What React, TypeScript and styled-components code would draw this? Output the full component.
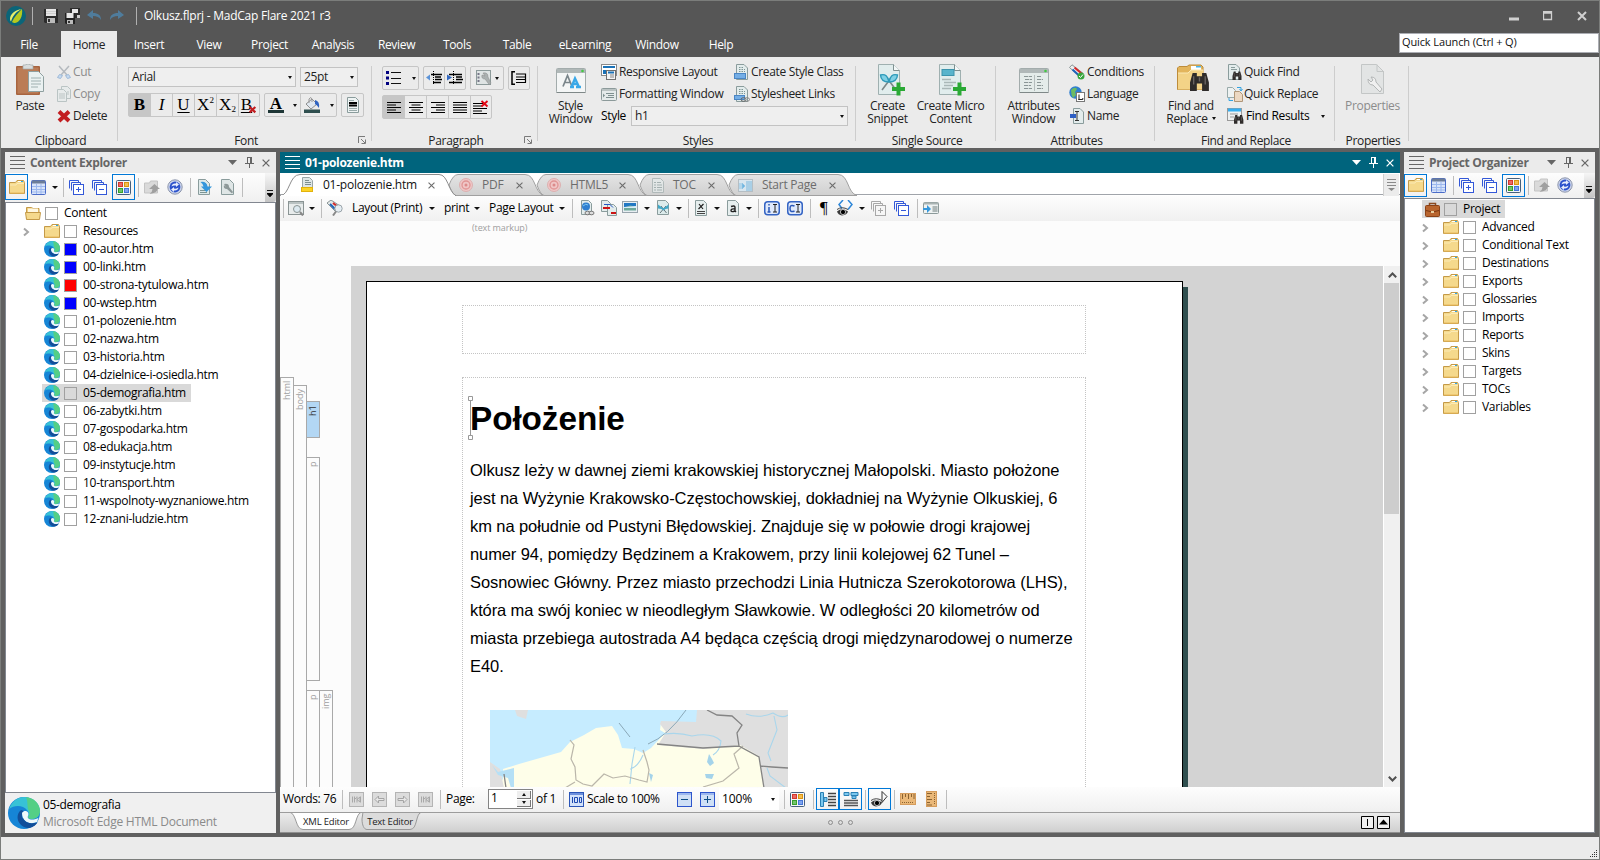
import React from 'react';
import styled, { createGlobalStyle, css } from 'styled-components';

const Global = createGlobalStyle`
  * { box-sizing: border-box; }
  body { margin: 0; overflow: hidden; background: #565656; }
  svg { display: block; flex: none; }
`;

const uiFont = css`
  font-family: "Open Sans", "Noto Sans", sans-serif;
  font-size: 12px;
  letter-spacing: -0.33px;
  line-height: 16px;
  white-space: nowrap;
`;

/* ---------- icons ---------- */

const docPath = (x: number, y: number, w: number, h: number, c = 4) =>
  `M${x} ${y}h${w - c}l${c} ${c}v${h - c}h${-w}z`;

const Doc = ({ x = 2.5, y = 0.5, w = 11, h = 15, c = 3.5 }) => (
  <path d={docPath(x, y, w, h, c)} fill="#e3ecec" stroke="#8a9c9c" />
);

const Binoculars = ({ x, y, s = 1 }: { x: number; y: number; s?: number }) => (
  <g transform={`translate(${x} ${y}) scale(${s})`}>
    <path d="M2.500 1h4v3h5V1h4L18 10v8h-6.500v-7h-5v7H0v-8z" fill="#2f2c2b" />
    <path d="M3.500 4v8M14.500 4v8M9 5v4" stroke="#6a6461" strokeWidth="1.300" />
  </g>
);

const art: Record<string, { box: string; el: React.ReactNode }> = {
  logo: {
    box: '0 0 20 20',
    el: (
      <>
        <circle cx="10" cy="10" r="10" fill="#0b6579" />
        <path d="M16 3C9 4 4 8 4 13c0 1 .5 2 1 2.500C7 9 11 5 16 3z" fill="#e6ef6b" />
        <path d="M16 3C12 7 8 11 6 16c1 .8 2 1 3 1 5-1 8-7 7-14z" fill="#b5c91f" />
      </>
    ),
  },
  save: {
    box: '0 0 14 14',
    el: (
      <>
        <path d="M0 0h14v14H1l-1-1z" fill="#2c2c2c" />
        <rect x="2" y="0" width="10" height="7" fill="#e6e6e6" />
        <path d="M2 2.500h10M2 4.500h10" stroke="#cfcfcf" />
        <rect x="3" y="9" width="8" height="5" fill="#bbb" />
        <rect x="4" y="10" width="2" height="3" fill="#333" />
      </>
    ),
  },
  saveAll: {
    box: '0 0 16 16',
    el: (
      <>
        <path d="M5 0h10v10H5z" fill="#2c2c2c" />
        <rect x="7" y="1" width="6" height="4" fill="#e6e6e6" />
        <rect x="12" y="7" width="3" height="3" fill="#ccc" />
        <path d="M0 5h10v11H1l-1-1z" fill="#222" />
        <rect x="1.500" y="5" width="7" height="5" fill="#e6e6e6" />
        <rect x="2" y="12" width="6" height="4" fill="#bbb" />
        <rect x="3" y="13" width="2" height="2" fill="#333" />
      </>
    ),
  },
  undo: {
    box: '0 0 15 12',
    el: <path d="M0 5l6-5v3c5 0 8 2 8 7-2-3-4-4-8-4v3z" fill="#4f7c9c" />,
  },
  redo: {
    box: '0 0 15 12',
    el: <path d="M15 5L9 0v3C4 3 1 5 1 10c2-3 4-4 8-4v3z" fill="#4f7c9c" />,
  },
  paste: {
    box: '0 0 28 32',
    el: (
      <>
        <rect x="0" y="2" width="24" height="29" rx="1" fill="#a8643f" />
        <rect x="1.500" y="3.500" width="21" height="26" fill="#bb7c56" />
        <path d="M7 1h2q3-2 6 0h2v4H7z" fill="#d8dcdc" stroke="#a0a8a8" strokeWidth=".7" />
        <path d={docPath(12.500, 7.500, 15, 20, 5)} fill="#eaf1f1" stroke="#8fa0a0" />
        <path d="M15 14h10M15 17h10M15 20h10M15 23h7" stroke="#9fb0b0" />
      </>
    ),
  },
  cut: {
    box: '0 0 16 16',
    el: (
      <>
        <path d="M3 2l8 9M13 2l-8 9" stroke="#b4b9be" strokeWidth="1.500" />
        <path d="M1.500 13.500l2-3 3 1-2 3zM14.500 13.500l-2-3-3 1 2 3z" fill="#c6daef" stroke="#9db9d8" />
      </>
    ),
  },
  copy: {
    box: '0 0 16 16',
    el: (
      <g opacity=".6">
        <path d={docPath(5.500, 0.500, 9, 12, 3)} fill="#e6ecec" stroke="#9aabab" />
        <path d={docPath(1.500, 3.500, 9, 12, 3)} fill="#e6ecec" stroke="#9aabab" />
        <path d="M3 8h6M3 10h6M3 12h6M11 6h2M11 8h2" stroke="#9aabab" />
      </g>
    ),
  },
  del: {
    box: '0 0 16 16',
    el: <path d="M3 3.500l10 9.500M13 3.500L3 13" stroke="#c21d20" strokeWidth="4" />,
  },
  fill: {
    box: '0 0 18 18',
    el: (
      <>
        <path d="M3 8l6-5 5 5-6 5z" fill="#dfe7ef" stroke="#777" strokeWidth=".8" />
        <path d="M6 7V3q2-3 3 0v3" fill="none" stroke="#999" />
        <path d="M12 4q5 1 4 8-2-3-4-4z" fill="#2f63c0" />
        <rect x="1" y="13.500" width="16" height="3.500" fill="#2f4f4f" />
      </>
    ),
  },
  blockDoc: {
    box: '0 0 12 16',
    el: (
      <>
        <path d={docPath(0.500, 0.500, 11, 15, 3)} fill="#eef3f3" stroke="#8a9c9c" />
        <path d="M2 6h8M2 8.500h8" stroke="#000" strokeWidth="2" />
        <path d="M2 3.500h5M2 11.500h8M2 13.500h8" stroke="#9aa" />
      </>
    ),
  },
  bullets: {
    box: '0 0 16 14',
    el: (
      <>
        <path d="M0 1.500h3M0 7h3M0 12.500h3" stroke="#00007f" strokeWidth="3" />
        <path d="M5 1.500h10M5 7.500h10M5 12.500h10" stroke="#111" />
      </>
    ),
  },
  outdent: {
    box: '0 0 16 14',
    el: (
      <>
        <path d="M5 3.500h11M9 6h6M9 8.500h7M7 11.500h8" stroke="#000" strokeWidth="1.300" />
        <path d="M7.500 0v14" stroke="#000" strokeDasharray="1 1" />
        <path d="M0 6.500l4-3v6z" fill="#5b93d8" />
      </>
    ),
  },
  indent: {
    box: '0 0 16 14',
    el: (
      <>
        <path d="M2 3.500h13M9 6h6M9 8.500h7M2 11.500h13" stroke="#000" strokeWidth="1.300" />
        <path d="M6.500 0v14" stroke="#000" strokeDasharray="1 1" />
        <path d="M5 6.500l-5-3v6z" fill="#3368c0" />
      </>
    ),
  },
  wrenchBox: {
    box: '0 0 16 16',
    el: (
      <>
        <rect x=".5" y=".5" width="14" height="14" fill="#dfe4e4" stroke="#8c9a9a" />
        <path d="M2.500 3v10" stroke="#778" strokeDasharray="2 1.500" strokeWidth="2" />
        <path d="M7 3q5-1 5 4l3 6-1.500 2L9 9Q5 9 6 5l3 1z" fill="#aab0b0" stroke="#888" strokeWidth=".5" />
      </>
    ),
  },
  lineSpace: {
    box: '0 0 16 14',
    el: (
      <>
        <path d="M4 .7H1v12.600h3" fill="none" stroke="#000" strokeWidth="1.500" />
        <path d="M5 3h10M5 6h9M5 8.500h10M5 11.500h10M14.500 2.500v9" stroke="#000" strokeWidth="1.200" />
      </>
    ),
  },
  alignL: { box: '0 0 14 11', el: <path d="M0 .5h14M0 3h9M0 5.500h14M0 8h9M0 10.500h14" stroke="#000" /> },
  alignC: { box: '0 0 14 11', el: <path d="M0 .5h14M2.500 3h9M0 5.500h14M2.500 8h9M0 10.500h14" stroke="#000" /> },
  alignR: { box: '0 0 14 11', el: <path d="M0 .5h14M5 3h9M0 5.500h14M5 8h9M0 10.500h14" stroke="#000" /> },
  alignJ: { box: '0 0 14 11', el: <path d="M0 .5h14M0 3h14M0 5.500h14M0 8h14M0 10.500h14" stroke="#000" /> },
  alignX: {
    box: '0 0 16 14',
    el: (
      <>
        <path d="M0 3.500h10M0 6h9M0 8.500h14M0 11h9M0 13.500h14" stroke="#000" />
        <path d="M8.500 1l6 5.500M14.500 1l-6 5.500" stroke="#e30613" strokeWidth="1.800" />
      </>
    ),
  },
  responsive: {
    box: '0 0 16 16',
    el: (
      <>
        <rect x=".5" y=".5" width="15" height="11" fill="#fff" stroke="#8a8a8a" />
        <path d="M2 3h12" stroke="#1a72b8" strokeWidth="2" />
        <path d="M2 6h3v4H2z" fill="#1a72b8" />
        <rect x="5.500" y="6.500" width="9" height="9" fill="#f4f4f4" stroke="#707070" />
        <path d="M7 8.500h6" stroke="#1a72b8" strokeWidth="2" />
        <path d="M9 11h4M9 13h4" stroke="#888" />
      </>
    ),
  },
  formatWin: {
    box: '0 0 16 16',
    el: (
      <>
        <rect x=".5" y="2.500" width="15" height="12" rx="1" fill="#e4eaea" stroke="#8c9a9a" />
        <path d="M1 4h14" stroke="#b9c2c2" strokeWidth="2" />
        <path d="M5 7.500h8M7 9.500h6M5 11.500h8" stroke="#7d8f8f" />
        <path d="M2 7.500l2 2-2 2z" fill="#7d8f8f" />
      </>
    ),
  },
  styleClass: {
    box: '0 0 16 16',
    el: (
      <>
        <Doc />
        <path d="M5 3.500h4M5 5.500h6M5 7.500h6" stroke="#7d9595" strokeDasharray="1.500 1" />
        <rect x=".5" y="9.500" width="11" height="5" fill="#74aee6" stroke="#4b86c4" />
      </>
    ),
  },
  styleLinks: {
    box: '0 0 16 16',
    el: (
      <>
        <Doc />
        <path d="M5 3.500h4M5 5.500h6M5 7.500h6" stroke="#7d9595" strokeDasharray="1.500 1" />
        <rect x=".5" y="9.500" width="10" height="4" fill="#74aee6" stroke="#4b86c4" />
        <ellipse cx="9.500" cy="13.500" rx="2.500" ry="1.800" fill="none" stroke="#666" />
        <ellipse cx="13" cy="13.500" rx="2.500" ry="1.800" fill="none" stroke="#888" />
      </>
    ),
  },
  styleWin: {
    box: '0 0 30 26',
    el: (
      <>
        <rect x=".5" y=".5" width="29" height="24" rx="1" fill="#f4f6f6" stroke="#a3acac" />
        <rect x="1" y="1" width="28" height="4" fill="#b0b8b8" />
        <path d="M.5 24.500h29" stroke="#7f8888" />
        <circle cx="26.500" cy="3" r="1.300" fill="#43c843" />
        <path d="M7 18.500L11.500 7.500 16 18.500M9 14.500h5.500" fill="none" stroke="#7a868b" strokeWidth="1.700" />
        <path d="M14 19h4M15.500 19L19 10.500l4 8.500M17 16h5M20 19h5" fill="none" stroke="#3aa8e8" strokeWidth="2.400" />
      </>
    ),
  },
  snippet: {
    box: '0 0 28 32',
    el: (
      <>
        <path d={docPath(0.500, 0.500, 21, 30, 6)} fill="#e1eded" stroke="#9fb0b0" />
        <path d="M15.500 .5v6h6" fill="#f4f8f8" stroke="#7f9090" />
        <path d="M4 26l9-12M18 26L9 14" stroke="#7c8888" strokeWidth="1.600" />
        <path d="M2.500 11q7-2 8.500 7-8 0-8.500-7zM19.500 11q-7-2-8.500 7 8 0 8.500-7z" fill="#7fd0e4" stroke="#2d9ab9" strokeWidth="1.400" />
        <path d="M20.500 18.500v13M14 25h13" stroke="#2aa935" strokeWidth="4" />
      </>
    ),
  },
  micro: {
    box: '0 0 28 32',
    el: (
      <>
        <path d={docPath(0.500, 0.500, 21, 30, 6)} fill="#e1eded" stroke="#9fb0b0" />
        <path d="M15.500 .5v6h6" fill="#f4f8f8" stroke="#7f9090" />
        <rect x="3" y="5.500" width="12" height="6" fill="#58b4cc" stroke="#3c94ac" />
        <path d="M3 15.500h9M5 18.500h12M5 21.500h9M3 24.500h9" stroke="#aab8b8" strokeWidth="1.300" />
        <path d="M20.500 18.500v13M14 25h13" stroke="#2aa935" strokeWidth="4" />
      </>
    ),
  },
  attrWin: {
    box: '0 0 30 26',
    el: (
      <>
        <rect x=".5" y=".5" width="29" height="24" rx="1" fill="#e4ecea" stroke="#a3acac" />
        <rect x="1" y="1" width="28" height="4" fill="#b0b8b8" />
        <path d="M.5 24.500h29" stroke="#7f8888" />
        <circle cx="26.500" cy="3" r="1.300" fill="#43c843" />
        <path d="M15.500 7v16" stroke="#b5bdbd" />
        <path d="M5 8.500h8M6 11.500h7M5 14.500h8M5 17.500h7M5 20.500h8M18 8.500h4M18 11.500h6M18 14.500h4M18 17.500h6M18 20.500h6" stroke="#8a9696" strokeDasharray="4 .7" />
      </>
    ),
  },
  conditions: {
    box: '0 0 16 16',
    el: (
      <>
        <path d="M.5 3.500L3 .8l11 8.500-2.500 4z" fill="#eef0f0" stroke="#8a9494" />
        <path d="M3.500 5.500l7 6.500" stroke="#1d63b8" strokeWidth="2" />
        <path d="M5.500 3.500l7 6" stroke="#d62828" strokeWidth="2" />
        <circle cx="12" cy="12" r="3.500" fill="#37a63d" />
        <path d="M10 12l1.500 1.500L14 10.500" stroke="#fff" fill="none" />
      </>
    ),
  },
  language: {
    box: '0 0 16 16',
    el: (
      <>
        <circle cx="6.500" cy="6.500" r="6.200" fill="#2f7fd0" />
        <path d="M2 4q4-4 6-1l-2 3 1 3-3 3Q2 9 2 4z" fill="#6dbb62" />
        <rect x="7.500" y="6.500" width="8" height="9" fill="#fff" stroke="#777" />
        <path d="M10 8.500v5M9.300 13.500h4.500v-1.500" fill="none" stroke="#222" />
      </>
    ),
  },
  name: {
    box: '0 0 16 16',
    el: (
      <>
        <Doc x={4.500} w={10} />
        <rect x="1" y="6" width="6" height="4" fill="#2c5fc4" />
        <path d="M6 3.500h4M8 3.500v9M6 12.500h4" stroke="#333" />
      </>
    ),
  },
  findReplace: {
    box: '0 0 34 29',
    el: (
      <>
        <path d="M1.500 25.500V4l1.500-1.500h8l2-1.500h12l2 2v22.500z" fill="#e3b55c" stroke="#bd8c3a" />
        <path d="M15 2h10v4H15z" fill="#fff" />
        <path d="M20 2h5v1.500h-5z" fill="#45b5ee" />
        <path d="M2 9h10l3-3h12.500v19.500H2z" fill="#f3d387" />
        <path d="M2 9h10l3-3h12" fill="none" stroke="#fbe9b5" />
        <Binoculars x={14} y={8} s={1.050} />
      </>
    ),
  },
  quickFind: {
    box: '0 0 16 16',
    el: (
      <>
        <Doc x={1.500} />
        <path d="M4 3.500h4M4 5.500h6" stroke="#8a9c9c" />
        <Binoculars x={5.500} y={7} s={0.500} />
      </>
    ),
  },
  quickReplace: {
    box: '0 0 16 16',
    el: (
      <>
        <path d={docPath(0.500, 1.500, 8, 10, 3)} fill="#eef2f2" stroke="#9aa" />
        <path d={docPath(7.500, 5.500, 8, 10, 3)} fill="#ecd8c2" stroke="#b09678" />
        <path d="M10 1.500h4v3M12.500 3l1.500 2 1.500-2M2 12v2.500h4" fill="none" stroke="#35a3e0" />
      </>
    ),
  },
  findResults: {
    box: '0 0 17 16',
    el: (
      <>
        <rect x=".5" y=".5" width="14" height="12" fill="#eef0f0" stroke="#999" />
        <path d="M1 2h13" stroke="#35aef0" strokeWidth="3" />
        <path d="M3 6h8M3 9h4" stroke="#999" />
        <Binoculars x={7} y={6.500} s={0.520} />
      </>
    ),
  },
  properties: {
    box: '0 0 24 31',
    el: (
      <>
        <path d={docPath(0.500, 0.500, 22, 29, 7)} fill="#e2e4e4" stroke="#c3c6c6" />
        <path d="M16 .5v7h7" fill="none" stroke="#c3c6c6" />
        <path d="M7 15l3 3 2-2-2-3q5 0 5 5l6 7-2 3-7-7q-5 0-5-6z" fill="#f0f0f0" stroke="#b3b6b6" />
      </>
    ),
  },
  folder: {
    box: '0 0 16 14',
    el: (
      <>
        <path d="M.5 2.500h6l1.500-2h6.500l1 2v11H.5z" fill="#f5d98c" stroke="#c49a48" />
        <path d="M9 1.500h5" stroke="#fff" />
        <path d="M12 1.500h2" stroke="#2ba8e8" />
        <path d="M1 5h6l1-1.500h7" stroke="#fbeab5" fill="none" />
        <path d="M1 13h14" stroke="#e8b95c" />
      </>
    ),
  },
  folderOpen: {
    box: '0 0 16 14',
    el: (
      <>
        <path d="M1.500 13V1.500h5l1.500 1h6V13z" fill="#f0cd7c" stroke="#c49a48" />
        <path d="M3 2.500h10v4H3z" fill="#fff8e2" />
        <path d="M.5 6.500h15L14.500 13.500h-13z" fill="#f5d98c" stroke="#c49a48" />
      </>
    ),
  },
  table: {
    box: '0 0 15 15',
    el: (
      <>
        <rect x=".5" y=".5" width="14" height="14" rx="1" fill="#d9e4fa" stroke="#4a6cc8" />
        <path d="M1 2h13" stroke="#6c7d98" strokeWidth="3" />
        <path d="M1 6.500h13M1 9.500h13M1 12h13M5.500 4v10M10 4v10" stroke="#9cb8ee" />
      </>
    ),
  },
  expand: {
    box: '0 0 15 15',
    el: (
      <g stroke="#3358d8" fill="#fff">
        <path d="M.5 8.500v-8h9v2M2.500 10.500v-8h9v2" fill="none" />
        <rect x="4.500" y="4.500" width="10" height="10" />
        <path d="M7 9.500h5M9.500 7v5" />
      </g>
    ),
  },
  collapse: {
    box: '0 0 15 15',
    el: (
      <g stroke="#3358d8" fill="#fff">
        <path d="M.5 8.500v-8h9v2M2.500 10.500v-8h9v2" fill="none" />
        <rect x="4.500" y="4.500" width="10" height="10" />
        <path d="M7 9.500h5" />
      </g>
    ),
  },
  expandOff: {
    box: '0 0 15 15',
    el: (
      <g stroke="#a8a8a8" fill="#f6f6f6">
        <path d="M.5 8.500v-8h9v2M2.500 10.500v-8h9v2" fill="none" />
        <rect x="4.500" y="4.500" width="10" height="10" />
        <path d="M7 9.500h5M9.500 7v5" />
      </g>
    ),
  },
  colors: {
    box: '0 0 15 15',
    el: (
      <>
        <rect x=".5" y=".5" width="14" height="14" rx="1" fill="#f3f6fa" stroke="#46607c" />
        <rect x="2.500" y="2.500" width="4" height="4" fill="#ea6a62" stroke="#d5372e" />
        <rect x="8.500" y="2.500" width="4" height="4" fill="#f5bd4e" stroke="#d99412" />
        <rect x="2.500" y="8.500" width="4" height="4" fill="#72c46b" stroke="#36a02c" />
        <rect x="8.500" y="8.500" width="4" height="4" fill="#7ea4ee" stroke="#4575d8" />
      </>
    ),
  },
  upload: {
    box: '0 0 16 15',
    el: (
      <>
        <path d="M.5 3h5l1-2h7v12H.5z" fill="#dadada" stroke="#c4c4c4" />
        <path d="M9 5l5.500 5H12q0 4-8 5 3-2 3-5H3.500z" transform="translate(1.500 -1)" fill="#a0a0a0" />
      </>
    ),
  },
  sync: {
    box: '0 0 16 16',
    el: (
      <>
        <circle cx="8" cy="8" r="7.200" fill="#c9d3ec" stroke="#8e97ad" />
        <circle cx="8" cy="8" r="5.400" fill="#2b52cc" />
        <path d="M4.500 7.500Q5 4.500 8 4.500h1V3l3 2.500L9 8V6.500Q6 6 4.500 7.500zM11.500 8.500Q11 11.500 8 11.500H7V13l-3-2.500L7 8v1.500q3 .5 4.500-1z" fill="#e8eefc" />
      </>
    ),
  },
  docArrow: {
    box: '0 0 15 16',
    el: (
      <>
        <path d={docPath(0.500, 0.500, 11, 15, 4)} fill="#dfeaea" stroke="#8a9c9c" />
        <path d="M2 11.500h7M2 13.500h7" stroke="#7d9595" />
        <path d="M2.500 3q6-1 7 4.500H14L8.500 13 3 7.500h2.500Q5 4.500 2.500 3z" fill="#3597dc" />
      </>
    ),
  },
  docWrench: {
    box: '0 0 14 16',
    el: (
      <>
        <path d={docPath(0.500, 0.500, 12, 15, 4)} fill="#dfe6e6" stroke="#8a9c9c" />
        <path d="M3 5q5-1 5 3l4 5-1 1.500L6 10Q2 10 3 6l2 2z" fill="#8d9898" />
      </>
    ),
  },
  edge: {
    box: '0 0 32 32',
    el: (
      <>
        <circle cx="16" cy="16" r="16" fill="#1685d6" />
        <path d="M1 12C4 4 10 0 16 0c10 0 16 7 16 14 0 5-4 8-8 8-3 0-4-1-4-2 1-3 1-5-1-7C15 8 6 8 1 12z" fill="#37c2d6" />
        <path d="M18 0.300C27 1 32 8 32 14c0 5-4 8-8 8-3 0-4-1-4-2 2-2 2-5 0-8-1-4 0-8-2-11.700z" fill="#5fd36a" opacity=".75" />
        <path d="M13 13c-5 4-5 13 3 17 6 3 11-1 13.500-4.500C24 28 15 26 14 19c-.3-2 .5-4 2-5z" fill="#124f9a" />
        <path d="M14 16c3-4 8-1 6 3-1 2 1 3.500 4 3.500 2.500 0 5-.6 6.500-1.800L29 25c-7 3-15 0-15-9z" fill="#eef8fa" />
        <path d="M15 21c2 5 9 7 14.500 4l-3 3.500q-9 2-12-5z" fill="#124f9a" />
      </>
    ),
  },
  chevron: { box: '0 0 7 10', el: <path d="M1 1.500l4 3.500-4 3.500" fill="none" stroke="#a6a6a6" strokeWidth="2" /> },
  briefcase: {
    box: '0 0 15 15',
    el: (
      <>
        <path d="M4.500 4V1.500h6V4" fill="none" stroke="#8a4a22" strokeWidth="1.500" />
        <rect x=".5" y="3.500" width="14" height="11" rx="1" fill="#b8652f" stroke="#8a4218" />
        <path d="M1 8.500q6.500 3 13 0" stroke="#7a3812" fill="none" />
        <rect x="6" y="9" width="3" height="2" fill="#e8cfa0" />
      </>
    ),
  },
  caretDown: { box: '0 0 9 5', el: <path d="M0 0h9L4.500 5z" fill="currentColor" /> },
  pin: {
    box: '0 0 9 11',
    el: <path d="M2.500 0v6M6.500 0v6M2 .5h5M0 6.500h9M4.500 7v4M5.500 1v5" fill="none" stroke="currentColor" />,
  },
  close: { box: '0 0 9 9', el: <path d="M.7.7l7.600 7.600M8.300.7L.7 8.300" stroke="currentColor" strokeWidth="1.400" /> },
  grip: { box: '0 0 15 14', el: <path d="M0 .5h15M0 4.500h15M0 8.500h15M0 12.500h15" stroke="currentColor" /> },
  pageYellow: {
    box: '0 0 13 16',
    el: (
      <>
        <path d={docPath(1.500, 0.500, 10, 14, 3)} fill="#dfe6e6" stroke="#9aa6a6" />
        <path d="M4 3.500h4M4 5.500h6M4 7.500h6" stroke="#7d8f8f" />
        <rect x=".5" y="10.500" width="11" height="4" fill="#fcd325" stroke="#e2b20c" />
      </>
    ),
  },
  target: {
    box: '0 0 14 14',
    el: (
      <>
        <circle cx="7" cy="7" r="6.500" fill="#efc6c6" stroke="#dcb0b0" />
        <circle cx="7" cy="7" r="4" fill="none" stroke="#e09494" strokeWidth="1.300" />
        <circle cx="7" cy="7" r="1.500" fill="#dc8a8a" />
      </>
    ),
  },
  toc: {
    box: '0 0 12 15',
    el: (
      <g opacity=".75">
        <path d={docPath(0.500, 0.500, 11, 14, 3)} fill="#e4eaea" stroke="#a5b1b1" />
        <path d="M2 4.500h2M5 4.500h4M2 7h2M5 7h5M2 9.500h2M5 9.500h5M2 12h2M5 12h5" stroke="#93a3a3" />
      </g>
    ),
  },
  start: {
    box: '0 0 15 13',
    el: (
      <>
        <rect x=".5" y=".5" width="14" height="12" fill="#d8e6ef" stroke="#b5bec4" />
        <rect x="8" y="2" width="6" height="10" fill="#a9cfe6" />
        <path d="M2 4v6M4 4l3 3-3 3z" fill="#6db4e0" stroke="#8fc4e4" />
      </>
    ),
  },
  preview: {
    box: '0 0 16 15',
    el: (
      <>
        <rect x=".5" y=".5" width="15" height="13" fill="#e8ecec" stroke="#8a9494" />
        <path d="M1 2h14" stroke="#b9c2c2" strokeWidth="2" />
        <circle cx="9" cy="8" r="3.500" fill="#dce9f0" stroke="#8a9494" />
        <path d="M12 11l3 3.500" stroke="#888" strokeWidth="2" />
      </>
    ),
  },
  tagSearch: {
    box: '0 0 16 16',
    el: (
      <>
        <path d="M0 3l4-3 9 6-4 6z" fill="#e3e8e8" stroke="#8a9494" />
        <path d="M3 4l5 5" stroke="#1d63b8" strokeWidth="2" />
        <path d="M6 3l5 4" stroke="#d62828" strokeWidth="2" />
        <circle cx="11.500" cy="8.500" r="3.700" fill="#e5edf2" stroke="#9aa4aa" />
        <path d="M9 11.500L6 15.500" stroke="#888" strokeWidth="2" />
      </>
    ),
  },
  linkDoc: {
    box: '0 0 15 16',
    el: (
      <>
        <path d={docPath(1.500, 0.500, 10, 14, 3)} fill="#e3ecec" stroke="#8a9c9c" />
        <circle cx="6" cy="6.500" r="4" fill="#2f7fd0" />
        <path d="M3 6q3-3 5-1" stroke="#7cc8f0" fill="none" />
        <ellipse cx="7.500" cy="13" rx="2.500" ry="1.800" fill="#ddd" stroke="#777" />
        <ellipse cx="11.500" cy="13" rx="2.500" ry="1.800" fill="#ddd" stroke="#777" />
      </>
    ),
  },
  xref: {
    box: '0 0 16 16',
    el: (
      <>
        <path d={docPath(0.500, 0.500, 9, 11, 3)} fill="#e3ecec" stroke="#8a9c9c" />
        <path d={docPath(6.500, 4.500, 9, 11, 3)} fill="#e3ecec" stroke="#8a9c9c" />
        <path d="M2 8h7M10 13h5" stroke="#cc1414" strokeWidth="2" />
        <path d="M3 4.500h6l3 3" stroke="#2456c4" fill="none" />
      </>
    ),
  },
  image: {
    box: '0 0 16 14',
    el: (
      <>
        <rect x=".5" y=".5" width="15" height="11" fill="#e8eef2" stroke="#98a4ac" />
        <rect x="2" y="2" width="12" height="4.500" fill="#2278c4" />
        <path d="M2 6.500l6-2 6 1v4H2z" fill="#6ca89a" />
        <path d="M2 6l12-1v2H2z" fill="#d8ecf8" />
      </>
    ),
  },
  snipDoc: {
    box: '0 0 13 16',
    el: (
      <>
        <path d={docPath(0.500, 0.500, 11, 14, 3)} fill="#dcebeb" stroke="#8a9c9c" />
        <path d="M3 13l6-7M9.500 13L4 6" stroke="#65757a" />
        <path d="M1 4.500l5.500 4 5-4v4l-3 .5-2 1.500-2-1.500-3.500-.5z" fill="#41a8c8" />
      </>
    ),
  },
  docX: {
    box: '0 0 13 16',
    el: (
      <>
        <path d={docPath(0.500, 0.500, 11, 15, 3)} fill="#e6eeee" stroke="#8a9c9c" />
        <path d="M4 4l4 5M8.500 4L3.500 9" stroke="#222" strokeWidth="1.200" />
        <path d="M2 11.500h8M2 13.500h8" stroke="#444" />
      </>
    ),
  },
  docA: {
    box: '0 0 13 16',
    el: (
      <>
        <path d={docPath(0.500, 0.500, 11, 15, 3)} fill="#e6eeee" stroke="#8a9c9c" />
        <path d="M4 6.500q4-1.500 4 1V12M8 9q-4-.5-4 1.500t4 .5l1 1" fill="none" stroke="#222" strokeWidth="1.400" />
      </>
    ),
  },
  iI: {
    box: '0 0 16 15',
    el: (
      <>
        <rect x=".75" y=".75" width="14.500" height="13" rx="3" fill="#dfe9fb" stroke="#3464c4" strokeWidth="1.500" />
        <path d="M5 3v1.500M5 6v5M3.500 11h3" stroke="#2b58b8" strokeWidth="1.500" />
        <path d="M9 3.500h4M11 3.500v7.500M9 11h4" stroke="#222" />
      </>
    ),
  },
  cI: {
    box: '0 0 16 15',
    el: (
      <>
        <rect x=".75" y=".75" width="14.500" height="13" rx="3" fill="#dfe9fb" stroke="#3464c4" strokeWidth="1.500" />
        <path d="M7.500 5Q3 3 3 7.500T7.500 10" fill="none" stroke="#2b58b8" strokeWidth="1.500" />
        <path d="M9 3.500h4M11 3.500v7.500M9 11h4" stroke="#222" />
      </>
    ),
  },
  eyeCode: {
    box: '0 0 16 16',
    el: (
      <>
        <path d="M6 0L2 4.500l3 4M11 0l4 4.500-4 5" fill="none" stroke="#2d86d8" strokeWidth="1.500" />
        <path d="M0 11.500q5-4.500 11 0-1 3.500-6 4Q1 15 0 11.500z" fill="#3a3a3a" />
        <path d="M0 9.500q5-3.500 11 0" fill="none" stroke="#444" />
        <circle cx="6" cy="12" r="2.600" fill="#000" stroke="#ddd" strokeWidth=".8" />
      </>
    ),
  },
  eyeTag: {
    box: '0 0 17 16',
    el: (
      <>
        <path d="M11 .5l5 5-5 6z" fill="none" stroke="#333" />
        <path d="M0 11.500q5-4.500 11 0-1 3.500-6 4Q1 15 0 11.500z" fill="#3a3a3a" />
        <path d="M0 9.500q5-3.500 11 0" fill="none" stroke="#444" />
        <circle cx="6" cy="12" r="2.600" fill="#000" stroke="#ddd" strokeWidth=".8" />
      </>
    ),
  },
  panelArrow: {
    box: '0 0 16 14',
    el: (
      <>
        <rect x=".5" y="1.500" width="15" height="11" rx="1" fill="#eef2f2" stroke="#8c9a9a" />
        <path d="M1 2.500h14" stroke="#a9b3b3" strokeWidth="2" />
        <path d="M9.500 6h5M9.500 8h5M9.500 10h5" stroke="#6f7c7c" />
        <path d="M0 7h4V4l4 4-4 4V9H0z" fill="#3597dc" />
      </>
    ),
  },
  launcher: { box: '0 0 8 8', el: <path d="M.5 7V.5H7M3 3l4 4M7.500 3.500v4h-4" fill="none" stroke="#7a7a7a" /> },
  navOff: {
    box: '0 0 15 15',
    el: (
      <>
        <rect x=".5" y=".5" width="14" height="14" fill="#dcdcdc" stroke="#b4b4b4" />
        <path d="M3.500 4.500v6M5.500 4.500v6M8 4.500v6M11.500 4.500v6M5.500 7.500l2-2M8 7.500l3-2.500v5z" stroke="#a8a8a8" fill="none" />
      </>
    ),
  },
  leftOff: {
    box: '0 0 15 15',
    el: (
      <>
        <rect x=".5" y=".5" width="14" height="14" fill="#dcdcdc" stroke="#b4b4b4" />
        <path d="M3 7.500l3.500-3.500v2.500H12v2H6.500V11z" fill="#e8e8e8" stroke="#a4a4a4" />
      </>
    ),
  },
  rightOff: {
    box: '0 0 15 15',
    el: (
      <>
        <rect x=".5" y=".5" width="14" height="14" fill="#dcdcdc" stroke="#b4b4b4" />
        <path d="M12 7.500L8.500 4v2.500H3v2h5.500V11z" fill="#e8e8e8" stroke="#a4a4a4" />
      </>
    ),
  },
  hundred: {
    box: '0 0 15 15',
    el: (
      <>
        <rect x=".5" y=".5" width="14" height="14" fill="#d3e2fa" stroke="#2a55b8" />
        <path d="M1 2h13" stroke="#6d90dc" strokeWidth="2" />
        <path d="M3.500 5v6M5.500 5.500h3v5h-3zM10.500 5.500h2v5h-2z" fill="none" stroke="#1d49b0" />
      </>
    ),
  },
  minus: {
    box: '0 0 15 15',
    el: (
      <>
        <rect x=".5" y=".5" width="14" height="14" fill="#cfe0f6" stroke="#2d55cc" />
        <path d="M1 2h13" stroke="#9cb8ee" strokeWidth="2" />
        <path d="M4 7.500h7" stroke="#0e4f86" />
      </>
    ),
  },
  plus: {
    box: '0 0 15 15',
    el: (
      <>
        <rect x=".5" y=".5" width="14" height="14" fill="#cfe0f6" stroke="#2d55cc" />
        <path d="M1 2h13" stroke="#9cb8ee" strokeWidth="2" />
        <path d="M4 7.500h7M7.500 4v7" stroke="#0e4f86" />
      </>
    ),
  },
  structV: {
    box: '0 0 16 15',
    el: (
      <>
        <path d="M.5.500h3v14h-3zM4 5.500h3v4H4z" fill="#7cc8ee" stroke="#2a80b4" />
        <path d="M8 1.500h8M8 4.500h8M8 7.500h8M8 10.500h8M8 13.500h8" stroke="#444" strokeWidth="1.600" />
      </>
    ),
  },
  structH: {
    box: '0 0 16 15',
    el: (
      <>
        <path d="M1 .5h5v3H1zM8 .5h7v3H8zM9 4h4v2.500H9z" fill="#7cc8ee" stroke="#2a80b4" />
        <path d="M1 8.500h14M1 11h14M1 13.500h14" stroke="#555" strokeWidth="1.500" />
      </>
    ),
  },
  rulerH: {
    box: '0 0 16 12',
    el: (
      <>
        <rect x=".5" y=".5" width="15" height="11" fill="#eab878" stroke="#d59c5c" />
        <path d="M2.500 1v5M5.500 1v3M8.500 1v5M11.500 1v3M14 1v5" stroke="#8a6230" />
        <path d="M2 9.500h12" stroke="#8a6230" strokeDasharray="1 1" />
      </>
    ),
  },
  rulerV: {
    box: '0 0 11 16',
    el: (
      <>
        <rect x=".5" y=".5" width="10" height="15" fill="#eab878" stroke="#d59c5c" />
        <path d="M1 2.500h5M1 5.500h3M1 8.500h5M1 11.500h3M1 14h5" stroke="#8a6230" />
        <path d="M8.500 2v12" stroke="#8a6230" strokeDasharray="1 1" />
      </>
    ),
  },
  overflow: {
    box: '0 0 6 7',
    el: <path d="M0 .5h6M0 3.500h6L3 6.800z" fill="#000" stroke="#000" strokeWidth=".9" />,
  },
  tabMenu: {
    box: '0 0 9 12',
    el: (
      <>
        <path d="M0 .5h9M0 3.500h9M0 6.500h9" stroke="#8a8a8a" />
        <path d="M1 9h7l-3.500 3z" fill="#8a8a8a" />
      </>
    ),
  },
  up: { box: '0 0 9 6', el: <path d="M.8 5.200L4.500 1.500l3.700 3.700" fill="none" stroke="#505050" strokeWidth="2" /> },
  down: { box: '0 0 9 6', el: <path d="M.8.8l3.700 3.700L8.200.8" fill="none" stroke="#505050" strokeWidth="2" /> },
  splitV: { box: '0 0 13 13', el: <path d="M.5.500h12v12H.5zM6.500 3v7" fill="#f0f0f0" stroke="#000" /> },
  splitUp: {
    box: '0 0 13 13',
    el: (
      <>
        <path d="M.5.500h12v12H.5z" fill="#f0f0f0" stroke="#000" />
        <path d="M2 8.500h9L6.500 3.500z" fill="#000" />
      </>
    ),
  },
  sizer: {
    box: '0 0 8 8',
    el: <path d="M6 .5h1M4 2.500h1M6 2.500h1M2 4.500h1M4 4.500h1M6 4.500h1M0 6.500h1M2 6.500h1M4 6.500h1M6 6.500h1" stroke="#333" />,
  },
};

const Icon = ({ n, w, h }: { n: string; w?: number; h?: number }) => {
  const parts = art[n].box.split(' ');
  return (
    <svg width={w ?? parts[2]} height={h ?? parts[3]} viewBox={art[n].box}>
      {art[n].el}
    </svg>
  );
};

/* ---------- frame ---------- */

const Frame = styled.div`
  ${uiFont}
  width: 1600px;
  height: 860px;
  display: flex;
  flex-direction: column;
  background: #606060;
  border: 1px solid #7b7d7b;
  color: #222;
`;

const TitleRow = styled.div`
  height: 30px;
  flex: none;
  display: flex;
  align-items: center;
  background: #565656;
  color: #fff;
`;

const TitleText = styled.span`
  letter-spacing: -0.25px;
`;

const Gap = styled.div<{ $w: number }>`
  width: ${(p) => p.$w}px;
  flex: none;
`;

const TitleSep = styled.div`
  width: 1px;
  height: 18px;
  background: #b0b0b0;
`;

const WindowButtons = styled.div`
  margin-left: auto;
  margin-right: 12px;
  display: flex;
  gap: 24px;
  align-items: flex-end;
  color: #d0d0d0;
`;

const MenuRow = styled.div`
  height: 26px;
  flex: none;
  display: flex;
  background: #565656;
`;

const MenuTab = styled.div<{ $w: number; $on?: boolean }>`
  width: ${(p) => p.$w}px;
  height: 26px;
  line-height: 28px;
  text-align: center;
  color: ${(p) => (p.$on ? '#222' : '#fff')};
  background: ${(p) => (p.$on ? '#ebebeb' : 'transparent')};
`;

const QuickLaunch = styled.div`
  margin-left: auto;
  margin-top: 2px;
  width: 200px;
  height: 20px;
  line-height: 16px;
  padding-left: 2px;
  background: #fff;
  border: 1px solid #abadb3;
  font-size: 11px;
  letter-spacing: -0.12px;
  color: #111;
`;

/* ---------- ribbon ---------- */

const Ribbon = styled.div`
  height: 91px;
  flex: none;
  display: flex;
  background: #ebebeb;
`;

const Group = styled.div<{ $w: number }>`
  width: ${(p) => p.$w}px;
  display: flex;
  flex-direction: column;
`;

const GroupBody = styled.div`
  height: 75px;
  display: flex;
`;

const GroupFoot = styled.div`
  height: 16px;
  display: flex;
  justify-content: center;
  align-items: center;
  position: relative;
  padding-left: 3px;
  padding-top: 1px;
`;

const Launch = styled.div`
  position: absolute;
  right: 5px;
  top: 4px;
`;

const GroupSep = styled.div`
  width: 1px;
  height: 75px;
  margin-top: 9px;
  background: #cdcdcd;
`;

const BigCommand = styled.div<{ $w: number; $off?: boolean }>`
  width: ${(p) => p.$w}px;
  padding-top: 7px;
  display: flex;
  flex-direction: column;
  align-items: center;
  text-align: center;
  line-height: 13px;
  color: ${(p) => (p.$off ? '#8c8c8c' : '#222')};
`;

const BigArt = styled.div`
  height: 35px;
  display: flex;
  align-items: flex-start;
`;

const WinArt = styled(BigArt)`
  padding-top: 4px;
`;

const CommandColumn = styled.div<{ $w: number }>`
  width: ${(p) => p.$w}px;
  padding-top: 4px;
`;

const Command = styled.div<{ $off?: boolean; $gap?: number }>`
  height: 22px;
  display: flex;
  align-items: center;
  gap: ${(p) => p.$gap ?? 1}px;
  color: ${(p) => (p.$off ? '#8c8c8c' : '#222')};
`;

const SplitLabel = styled.div`
  height: 13px;
  display: flex;
  align-items: center;
  gap: 4px;
`;

const Combo = styled.div<{ $w: number }>`
  width: ${(p) => p.$w}px;
  height: 20px;
  flex: none;
  display: flex;
  align-items: center;
  justify-content: space-between;
  padding: 0 3px 0 3px;
  border: 1px solid #c3c3c3;
  background: #efefef;
`;

const Caret = styled.span`
  display: block;
  width: 0;
  height: 0;
  flex: none;
  border: 2.500px solid transparent;
  border-top: 3px solid #111;
  border-bottom: 0;
`;

const ControlStack = styled.div<{ $top: number; $gap: number; $left: number }>`
  padding: ${(p) => p.$top}px 0 0 ${(p) => p.$left}px;
  display: flex;
  flex-direction: column;
  gap: ${(p) => p.$gap}px;
`;

const ControlRow = styled.div`
  display: flex;
  gap: 4px;
`;

const ButtonStrip = styled.div`
  display: flex;
  height: 24px;
  border: 1px solid #c6c6c6;
  border-radius: 2px;
`;

const StripButton = styled.div<{ $w: number; $on?: boolean; $gap?: number }>`
  width: ${(p) => p.$w}px;
  display: flex;
  align-items: center;
  justify-content: center;
  gap: ${(p) => p.$gap ?? 9}px;
  background: ${(p) => (p.$on ? '#c6c6c6' : 'transparent')};
  & + & { border-left: 1px solid #c6c6c6; }
`;

const Glyph = styled.span<{ $b?: boolean; $i?: boolean; $u?: boolean }>`
  font-family: "Liberation Serif", serif;
  font-size: 17px;
  letter-spacing: 0;
  line-height: 18px;
  color: #000;
  font-weight: ${(p) => (p.$b ? 'bold' : 'normal')};
  font-style: ${(p) => (p.$i ? 'italic' : 'normal')};
  text-decoration: ${(p) => (p.$u ? 'underline' : 'none')};
  text-underline-offset: 2px;
  display: flex;
`;

const Small = styled.small<{ $low?: boolean }>`
  font-size: 9px;
  line-height: 9px;
  align-self: ${(p) => (p.$low ? 'flex-end' : 'flex-start')};
`;

const RedCross = styled.span`
  position: relative;
  margin-left: -4px;
  top: 9px;
  height: 9px;
`;

const FontColor = styled.span`
  font-family: "Liberation Serif", serif;
  font-size: 17px;
  font-weight: bold;
  letter-spacing: 0;
  line-height: 13px;
  width: 16px;
  text-align: center;
  color: #000;
  border-bottom: 3px solid #1e3636;
`;

/* ---------- work area ---------- */

const Work = styled.div`
  height: 689px;
  flex: none;
  display: flex;
  gap: 4px;
  padding: 4px 4px;
`;

const Panel = styled.div<{ $w: number }>`
  width: ${(p) => p.$w}px;
  flex: none;
  display: flex;
  flex-direction: column;
  background: #f0f0f0;
`;

const PanelHead = styled.div<{ $on?: boolean }>`
  height: 21px;
  flex: none;
  display: flex;
  align-items: center;
  padding-left: 5px;
  font-weight: bold;
  letter-spacing: -0.3px;
  background: ${(p) => (p.$on ? '#00647d' : '#ebebeb')};
  color: ${(p) => (p.$on ? '#fff' : '#666')};
`;

const HeadTitle = styled.span`
  margin-left: 5px;
  margin-right: auto;
`;

const HeadTools = styled.div<{ $r: number }>`
  display: flex;
  align-items: center;
  gap: 8px;
  margin-right: ${(p) => p.$r}px;
`;

const Toolbar = styled.div<{ $h: number }>`
  height: ${(p) => p.$h}px;
  flex: none;
  display: flex;
  align-items: center;
  padding-bottom: 1px;
  background: linear-gradient(#fdfdfd, #f0f0f0);
`;

const Slot = styled.div<{ $w: number; $ml?: number }>`
  width: ${(p) => p.$w}px;
  margin-left: ${(p) => p.$ml ?? 0}px;
  flex: none;
  color: #000;
`;

const Divider = styled.div<{ $ml: number }>`
  width: 1px;
  height: 19px;
  flex: none;
  margin-left: ${(p) => p.$ml}px;
  background: #bdbdbd;
`;

const Pressed = styled.div<{ $ml?: number; $h?: number; $w?: number }>`
  width: ${(p) => p.$w ?? 23}px;
  height: ${(p) => p.$h ?? 23}px;
  margin-left: ${(p) => p.$ml ?? 0}px;
  flex: none;
  display: flex;
  align-items: center;
  justify-content: center;
  border: 1px solid #0078d7;
`;

const Arrow = styled(Caret)<{ $ml: number }>`
  margin-left: ${(p) => p.$ml}px;
  border-width: 3px 3px 0;
`;

const Overflow = styled.div`
  align-self: stretch;
  width: 11px;
  margin-left: auto;
  margin-bottom: -1px;
  display: flex;
  align-items: flex-end;
  justify-content: center;
  padding: 0 2px 5px 0;
  background: linear-gradient(#f6f6f6, #c4c4c4);
  border-radius: 0 0 3px 0;
`;

const Tree = styled.div`
  flex: 1;
  border: 1px solid #828790;
  background: #fff;
  padding-top: 1px;
`;

const TreeRow = styled.div<{ $pl: number }>`
  height: 18px;
  display: flex;
  align-items: center;
  padding-left: ${(p) => p.$pl}px;
  color: #000;
  letter-spacing: -0.28px;
`;

const Twist = styled.div`
  width: 19px;
  padding: 2px 0 0 0;
`;

const RowBody = styled.div<{ $on?: boolean; $w: number }>`
  height: 18px;
  width: ${(p) => (p.$on ? `${p.$w}px` : 'auto')};
  display: flex;
  align-items: center;
  padding-left: 2px;
  gap: 4px;
  background: ${(p) => (p.$on ? '#d9d9d9' : 'transparent')};
`;

const Box = styled.div<{ $c?: string }>`
  width: 13px;
  height: 13px;
  flex: none;
  margin-right: 2px;
  margin-top: 1px;
  border: 1px solid #a0a0a0;
  background: ${(p) => p.$c ?? 'transparent'};
`;

const FileInfo = styled.div`
  height: 40px;
  display: flex;
  align-items: center;
  padding: 0 0 0 3px;
  gap: 3px;
  line-height: 17px;
  color: #000;
`;

const Muted = styled.div`
  color: #8a8a8a;
  letter-spacing: -0.24px;
`;

/* ---------- editor ---------- */

const DocTabs = styled.div`
  height: 23px;
  flex: none;
  display: flex;
  align-items: flex-end;
  background: linear-gradient(#fff 21px, #a0a4aa 21px, #a0a4aa 22px, #fff 22px);
`;

const DocTab = styled.div<{ $w: number; $front: boolean }>`
  width: ${(p) => p.$w}px;
  height: 22px;
  flex: none;
  margin-right: -10px;
  position: relative;
  z-index: ${(p) => (p.$front ? 1 : 0)};
`;

const TabShape = styled.svg`
  position: absolute;
  left: 0;
  top: 0;
`;

const TabContent = styled.div<{ $pl: number; $dim?: boolean }>`
  position: relative;
  height: 22px;
  display: flex;
  align-items: center;
  padding-left: ${(p) => p.$pl}px;
  color: ${(p) => (p.$dim ? '#6c6c6c' : '#111')};
`;

const TabText = styled.span<{ $w: number }>`
  width: ${(p) => p.$w}px;
  margin-left: 9px;
  letter-spacing: -0.25px;
`;

const CloseMark = styled.span`
  color: #6c6c6c;
`;

const TabMenu = styled.div`
  margin-left: auto;
  margin-right: 1px;
  width: 16px;
  height: 22px;
  display: flex;
  align-items: center;
  justify-content: center;
  background: #ececec;
  border-left: 1px solid #d0d0d0;
`;

const Surface = styled.div`
  height: 566px;
  flex: none;
  display: flex;
  background: #fcfcfc;
  overflow: hidden;
`;

const Gutter = styled.div`
  width: 71px;
  flex: none;
  padding-top: 156px;
  display: flex;
  align-items: flex-start;
`;

const GutterColumn = styled.div<{ $top?: number }>`
  padding-top: ${(p) => p.$top ?? 0}px;
  margin-right: -1px;
  display: flex;
  flex-direction: column;
`;

const Bar = styled.div<{ $h: number; $mt?: number; $on?: boolean }>`
  width: 14px;
  height: ${(p) => p.$h}px;
  margin-top: ${(p) => p.$mt ?? 0}px;
  flex: none;
  writing-mode: vertical-rl;
  transform: rotate(180deg);
  line-height: 12px;
  font-size: 9px;
  letter-spacing: 0;
  border: 1px solid #a9a9a9;
  padding: 0 0 3px;
  color: ${(p) => (p.$on ? '#333' : '#a0a0a0')};
  background: ${(p) => (p.$on ? '#b3d7f4' : '#fcfcfc')};
  display: flex;
  justify-content: flex-end;
`;

const Stage = styled.div`
  flex: 1;
  display: flex;
  flex-direction: column;
`;

const Markup = styled.div`
  height: 45px;
  flex: none;
  padding-left: 121px;
  font-size: 9px;
  letter-spacing: -0.1px;
  line-height: 14px;
  color: #a0a0a0;
`;

const Canvas = styled.div`
  flex: 1;
  display: flex;
`;

const Desk = styled.div`
  width: 1032px;
  height: 521px;
  padding: 15px 0 0 15px;
  background: #d3d3d3;
`;

const Sheet = styled.div`
  width: 817px;
  height: 520px;
  padding: 23px 0 0 95px;
  border: 1px solid #000;
  border-bottom: 0;
  background: #fff;
  box-shadow: 5px 6px 0 #2f4f4f;
`;

const HeaderFrame = styled.div`
  width: 624px;
  height: 49px;
  border: 1px dotted #c4c4c4;
`;

const BodyFrame = styled.div`
  width: 624px;
  height: 500px;
  margin-top: 23px;
  padding-left: 7px;
  border: 1px dotted #c4c4c4;
  border-bottom: 0;
`;

const Heading = styled.h1`
  margin: 0;
  padding-top: 21px;
  height: 78px;
  font: bold 33.300px/40px "Liberation Sans", Arial, sans-serif;
  letter-spacing: -0.07px;
  color: #000;
  position: relative;
`;

const Handle = styled.svg`
  position: absolute;
  left: -2px;
  top: 18px;
`;

const Line = styled.div<{ $ls: number }>`
  height: 28px;
  font: 16.500px/28px "Liberation Sans", Arial, sans-serif;
  letter-spacing: ${(p) => p.$ls}px;
  color: #000;
`;

const MapBox = styled.div`
  margin: 30px 0 0 20px;
`;

const Scroll = styled.div`
  width: 17px;
  height: 521px;
  padding-left: 1px;
  background: linear-gradient(90deg, #fff 1px, #f0f0f0 1px);
  display: flex;
  flex-direction: column;
  align-items: stretch;
`;

const ScrollEnd = styled.div`
  height: 17px;
  flex: none;
  display: flex;
  align-items: center;
  justify-content: center;
`;

const Thumb = styled.div`
  height: 231px;
  flex: none;
  margin: 0 1px auto 0;
  background: #cdcdcd;
`;

const Spinner = styled.div`
  width: 45px;
  height: 20px;
  margin-left: 14px;
  flex: none;
  display: flex;
  justify-content: space-between;
  padding: 0 1px 0 2px;
  line-height: 16px;
  border: 1px solid #848484;
  background: #fff;
  color: #000;
`;

const SpinButtons = styled.div`
  width: 14px;
  padding: 1px 0;
  display: flex;
  flex-direction: column;
  gap: 1px;
`;

const SpinButton = styled.div<{ $up?: boolean }>`
  flex: 1;
  display: flex;
  align-items: center;
  justify-content: center;
  border-right: 1px solid #777;
  border-bottom: 1px solid #777;
  background: #eee;
  & > span { transform: ${(p) => (p.$up ? 'rotate(180deg)' : 'none')}; }
`;

const ZoomBox = styled.div`
  width: 60px;
  height: 22px;
  margin-left: 4px;
  flex: none;
  display: flex;
  align-items: center;
  padding: 0 4px 0 3px;
  justify-content: space-between;
  background: #fff;
  color: #000;
  letter-spacing: -0.1px;
`;

const ModeTabs = styled.div`
  height: 21px;
  flex: none;
  display: flex;
  position: relative;
  background: linear-gradient(#ececec, #cfcfcf);
  border-top: 1px solid #9c9c9c;
  border-bottom: 1px solid #8f8f8f;
  font-size: 9.500px;
  letter-spacing: -0.2px;
`;

const ModeTab = styled.div<{ $w: number; $ml: number }>`
  width: ${(p) => p.$w}px;
  height: 17px;
  margin-left: ${(p) => p.$ml}px;
  position: relative;
  text-align: center;
  line-height: 18px;
  color: #222;
`;

const ModeLabel = styled.span`
  position: relative;
`;

const Dots = styled.div`
  margin-left: auto;
  display: flex;
  align-items: center;
  gap: 5px;
`;

const Dot = styled.i`
  width: 5px;
  height: 5px;
  border: 1px solid #8c8c8c;
  border-radius: 50%;
`;

const SplitTools = styled.div`
  width: 508px;
  margin-left: 39px;
  display: flex;
  align-items: center;
  justify-content: flex-end;
  padding-right: 10px;
  gap: 3px;
`;

const Status = styled.div`
  flex: 1;
  display: flex;
  align-items: flex-end;
  justify-content: flex-end;
  padding: 0 1px 1px;
  background: #ebebeb;
`;

const menu: [string, number][] = [
  ['Home', 56], ['Insert', 64], ['View', 56], ['Project', 65], ['Analysis', 62], ['Review', 65],
  ['Tools', 56], ['Table', 64], ['eLearning', 72], ['Window', 72], ['Help', 56],
];

const files: [string, string?][] = [
  ['00-autor.htm', '#0000ff'], ['00-linki.htm', '#0000ff'], ['00-strona-tytulowa.htm', '#ff0000'],
  ['00-wstep.htm', '#0000ff'], ['01-polozenie.htm'], ['02-nazwa.htm'], ['03-historia.htm'],
  ['04-dzielnice-i-osiedla.htm'], ['05-demografia.htm'], ['06-zabytki.htm'], ['07-gospodarka.htm'],
  ['08-edukacja.htm'], ['09-instytucje.htm'], ['10-transport.htm'], ['11-wspolnoty-wyznaniowe.htm'],
  ['12-znani-ludzie.htm'],
];

const folders = ['Advanced', 'Conditional Text', 'Destinations', 'Exports', 'Glossaries', 'Imports',
  'Reports', 'Skins', 'Targets', 'TOCs', 'Variables'];

const paragraph: [string, number][] = [
  ['Olkusz leży w dawnej ziemi krakowskiej historycznej Małopolski. Miasto położone', -0.06],
  ['jest na Wyżynie Krakowsko-Częstochowskiej, dokładniej na Wyżynie Olkuskiej, 6', -0.06],
  ['km na południe od Pustyni Błędowskiej. Znajduje się w połowie drogi krajowej', -0.09],
  ['numer 94, pomiędzy Będzinem a Krakowem, przy linii kolejowej 62 Tunel –', -0.11],
  ['Sosnowiec Główny. Przez miasto przechodzi Linia Hutnicza Szerokotorowa (LHS),', -0.06],
  ['która ma swój koniec w nieodległym Sławkowie. W odległości 20 kilometrów od', -0.11],
  ['miasta przebiega autostrada A4 będąca częścią drogi międzynarodowej o numerze', -0.06],
  ['E40.', -0.06],
];

const RibbonGroup = ({ w, label, launch, children }: { w: number; label: string; launch?: boolean; children: React.ReactNode }) => (
  <>
    <Group $w={w}>
      <GroupBody>{children}</GroupBody>
      <GroupFoot>
        {label}
        {launch && <Launch><Icon n="launcher" /></Launch>}
      </GroupFoot>
    </Group>
    <GroupSep />
  </>
);

const Cmd = ({ n, off, gap, children }: { n: string; off?: boolean; gap?: number; children: React.ReactNode }) => (
  <Command $off={off} $gap={gap}><Icon n={n} />{children}</Command>
);

const ToolIcon = ({ n, w, ml }: { n: string; w?: number; ml: number }) => (
  <Slot $w={w ?? 16} $ml={ml}><Icon n={n} /></Slot>
);

const Tab = ({ w, icon, text, tw, pl, dim }: { w: number; icon: string; text: string; tw: number; pl: number; dim?: boolean }) => (
  <DocTab $w={w} $front={!dim}>
    <TabShape width={w} height="22">
      <defs>
        <linearGradient id="tabFill" x1="0" y1="0" x2="0" y2="1">
          <stop offset="0" stopColor="#e4e4e4" />
          <stop offset="1" stopColor="#d0d0d0" />
        </linearGradient>
      </defs>
      <path
        d={dim
          ? `M9 21.500Q5 20 2 11Q6 .5 11 .5H${w - 20}C${w - 9} .5 ${w - 11} 19 ${w - 1} 21.500z`
          : `M0 22C10 21 9 .5 20 .5H${w - 18}C${w - 9} .5 ${w - 9} 17 ${w - 1} 22z`}
        fill={dim ? 'url(#tabFill)' : '#fff'}
        stroke={dim ? '#a0a0a0' : '#8c8c8c'}
      />
      {!dim && <path d={`M1 22H${w - 2}`} stroke="#fff" strokeWidth="2" />}
    </TabShape>
    <TabContent $pl={pl} $dim={dim}>
      <Icon n={icon} />
      <TabText $w={tw}>{text}</TabText>
      <CloseMark><Icon n="close" w={7} h={7} /></CloseMark>
    </TabContent>
  </DocTab>
);

const PolandMap = () => (
  <svg width="298" height="78" viewBox="0 0 298 78">
    <rect width="298" height="78" fill="#fefee9" />
    <path d="M0 0h207v13l-36-1-1 8 5 3-14 15-8 5-9-4-12-1-4-13-6-9-16 2-12 7-14 7-9 10-42 12-16 5v11L0 57z" fill="#c6ecff" />
    <path d="M25 0h13l-2 9-9-3z" fill="#dfdfdf" />
    <path d="M207 0h91v78h-24l-5-32-19-11-36 4-46-4 8-13-6-8 1-3 35 1z" fill="#dfdfdf" />
    <path d="M0 52l10 7 4 19H0z" fill="#dfdfdf" />
    <path d="M2 55l6 7 16-4v20h-3l-3-10-10-3z" fill="#b5e0f6" />
    <path d="M158 34q20-8 38-34M129 13l11 14" fill="none" stroke="#8aa8b8" />
    <path d="M174 24q15-2 28 2 20-4 29 5-1 10-8 14M256 4q13 5 27-1 9 6 15 2M284 6l3 14-9 23 3 8M277 58l3 8 16 12M145 37l-3 17-2 20M153 45q-5 12-13 14" fill="none" stroke="#a9d6ec" strokeWidth="1.100" />
    <path d="M219 44l3 5 2 4-4 3-3-4zM215 64l9 0-2 5-6-1zM159 63l4 2-2 7z" fill="#a4d3ea" />
    <path d="M80 30l4 5-3 14 4 8 1 13 7 4 9 2 12-12 9 4 12-2 14 4 8 2 2-12-2-8-4-12M253 36l-9 8 5 14-16 13-20 6M85 72l-10 6" fill="none" stroke="#bab6aa" strokeWidth="1.200" />
    <path d="M217 0l10 5 15 1 10 9-5 8 2 13 20 11 5 31M167 34l46 4 36-2M270 56l12 1 16 1M14 64l2 14" fill="none" stroke="#848484" strokeWidth="1.300" />
  </svg>
);

const PanelTools = ({ r }: { r: number }) => (
  <HeadTools $r={r}>
    <Icon n="caretDown" />
    <Icon n="pin" />
    <Icon n="close" w={8} h={8} />
  </HeadTools>
);

export default function App() {
  return (
    <Frame>
      <Global />
      <TitleRow>
        <Gap $w={5} />
        <Icon n="logo" />
        <Gap $w={6} />
        <TitleSep />
        <Gap $w={11} />
        <Icon n="save" />
        <Gap $w={7} />
        <Icon n="saveAll" />
        <Gap $w={6} />
        <Icon n="undo" />
        <Gap $w={7} />
        <Icon n="redo" />
        <Gap $w={12} />
        <TitleSep />
        <Gap $w={7} />
        <TitleText>Olkusz.flprj - MadCap Flare 2021 r3</TitleText>
        <WindowButtons>
          <svg width="10" height="10"><path d="M0 8h10" stroke="#d0d0d0" strokeWidth="3" /></svg>
          <svg width="10" height="10"><path d="M.5.500h8v8h-8zM1 2h8" fill="none" stroke="#d0d0d0" strokeWidth="1.300" /></svg>
          <svg width="10" height="10"><path d="M1 1l8 8M9 1L1 9" stroke="#d0d0d0" strokeWidth="2" /></svg>
        </WindowButtons>
      </TitleRow>
      <MenuRow>
        <MenuTab $w={56}>File</MenuTab>
        <Gap $w={4} />
        {menu.map(([t, w]) => <MenuTab key={t} $w={w} $on={t === 'Home'}>{t}</MenuTab>)}
        <QuickLaunch>Quick Launch (Ctrl + Q)</QuickLaunch>
      </MenuRow>

      <Ribbon>
        <RibbonGroup w={116} label="Clipboard">
          <BigCommand $w={55}><BigArt><Gap $w={3} /><Icon n="paste" /></BigArt><span>&nbsp;Paste</span></BigCommand>
          <CommandColumn $w={58}>
            <Cmd n="cut" off>Cut</Cmd>
            <Cmd n="copy" off>Copy</Cmd>
            <Cmd n="del">Delete</Cmd>
          </CommandColumn>
        </RibbonGroup>

        <RibbonGroup w={253} label="Font" launch>
          <ControlStack $left={10} $top={10} $gap={6}>
            <ControlRow>
              <Combo $w={168}>Arial<Caret /></Combo>
              <Combo $w={58}>25pt<Caret /></Combo>
            </ControlRow>
            <ControlRow>
              <ButtonStrip>
                <StripButton $w={21} $on><Glyph $b>B</Glyph></StripButton>
                <StripButton $w={22}><Glyph $i>I</Glyph></StripButton>
                <StripButton $w={22}><Glyph $u>U</Glyph></StripButton>
                <StripButton $w={22}><Glyph>X<Small>2</Small></Glyph></StripButton>
                <StripButton $w={22}><Glyph>X<Small $low>2</Small></Glyph></StripButton>
                <StripButton $w={21}>
                  <Glyph $u>B<RedCross><Icon n="del" w={9} h={9} /></RedCross></Glyph>
                </StripButton>
              </ButtonStrip>
              <ButtonStrip>
                <StripButton $w={35}><FontColor>A</FontColor><Caret /></StripButton>
                <StripButton $w={36}><Icon n="fill" /><Caret /></StripButton>
              </ButtonStrip>
              <ButtonStrip><StripButton $w={21}><Icon n="blockDoc" /></StripButton></ButtonStrip>
            </ControlRow>
          </ControlStack>
        </RibbonGroup>

        <RibbonGroup w={165} label="Paragraph" launch>
          <ControlStack $left={10} $top={9} $gap={5}>
            <ControlRow>
              <ButtonStrip><StripButton $w={35} $gap={10}><Icon n="bullets" /><Caret /></StripButton></ButtonStrip>
              <ButtonStrip>
                <StripButton $w={20}><Icon n="outdent" /></StripButton>
                <StripButton $w={21}><Icon n="indent" /></StripButton>
              </ButtonStrip>
              <ButtonStrip><StripButton $w={32} $gap={3}><Icon n="wrenchBox" /><Caret /></StripButton></ButtonStrip>
              <ButtonStrip><StripButton $w={20}><Icon n="lineSpace" /></StripButton></ButtonStrip>
            </ControlRow>
            <ControlRow>
              <ButtonStrip>
                <StripButton $w={21} $on><Icon n="alignL" /></StripButton>
                <StripButton $w={22}><Icon n="alignC" /></StripButton>
                <StripButton $w={22}><Icon n="alignR" /></StripButton>
                <StripButton $w={22}><Icon n="alignJ" /></StripButton>
                <StripButton $w={21}><Icon n="alignX" /></StripButton>
              </ButtonStrip>
            </ControlRow>
          </ControlStack>
        </RibbonGroup>

        <RibbonGroup w={317} label="Styles">
          <Gap $w={2} />
          <BigCommand $w={61}>
            <WinArt><Icon n="styleWin" /></WinArt>Style<br />Window
          </BigCommand>
          <div>
            <ControlRow>
              <CommandColumn $w={129}>
                <Cmd n="responsive" gap={2}>Responsive Layout</Cmd>
                <Cmd n="formatWin" gap={2}>Formatting Window</Cmd>
              </CommandColumn>
              <CommandColumn $w={114}>
                <Cmd n="styleClass" gap={1}>Create Style Class</Cmd>
                <Cmd n="styleLinks" gap={1}>Stylesheet Links</Cmd>
              </CommandColumn>
            </ControlRow>
            <Command $gap={0}>
              <Slot $w={30}>Style</Slot>
              <Combo $w={217}>h1<Caret /></Combo>
            </Command>
          </div>
        </RibbonGroup>

        <RibbonGroup w={139} label="Single Source">
          <BigCommand $w={63}><BigArt><Gap $w={8} /><Icon n="snippet" /></BigArt>Create<br />Snippet</BigCommand>
          <BigCommand $w={63}><BigArt><Gap $w={4} /><Icon n="micro" /></BigArt>Create Micro<br />Content</BigCommand>
        </RibbonGroup>

        <RibbonGroup w={158} label="Attributes">
          <Gap $w={2} />
          <BigCommand $w={71}>
            <WinArt><Icon n="attrWin" /></WinArt>Attributes<br />Window
          </BigCommand>
          <CommandColumn $w={84}>
            <Cmd n="conditions" gap={2}>Conditions</Cmd>
            <Cmd n="language" gap={2}>Language</Cmd>
            <Cmd n="name" gap={2}>Name</Cmd>
          </CommandColumn>
        </RibbonGroup>

        <RibbonGroup w={179} label="Find and Replace">
          <BigCommand $w={72}>
            <BigArt><Gap $w={3} /><Icon n="findReplace" /></BigArt>Find and
            <SplitLabel>Replace<Caret /></SplitLabel>
          </BigCommand>
          <CommandColumn $w={106}>
            <Cmd n="quickFind">Quick Find</Cmd>
            <Cmd n="quickReplace">Quick Replace</Cmd>
            <Command $gap={2}><Icon n="findResults" /><Slot $w={73}>Find Results</Slot><Caret /></Command>
          </CommandColumn>
        </RibbonGroup>

        <RibbonGroup w={73} label="Properties">
          <Gap $w={2} />
          <BigCommand $w={75} $off><BigArt><Icon n="properties" /></BigArt>Properties</BigCommand>
        </RibbonGroup>
      </Ribbon>

      <Work>
        <Panel $w={271}>
          <PanelHead>
            <Icon n="grip" />
            <HeadTitle>Content Explorer</HeadTitle>
            <PanelTools r={6} />
          </PanelHead>
          <Toolbar $h={29}>
            <Pressed $h={26}><Icon n="folder" /></Pressed>
            <ToolIcon n="table" w={15} ml={3} />
            <Arrow $ml={6} />
            <Divider $ml={5} />
            <ToolIcon n="expand" w={15} ml={5} />
            <ToolIcon n="collapse" w={15} ml={8} />
            <Pressed $h={26} $ml={5}><Icon n="colors" /></Pressed>
            <Divider $ml={3} />
            <ToolIcon n="upload" ml={5} />
            <ToolIcon n="sync" ml={7} />
            <Divider $ml={7} />
            <ToolIcon n="docArrow" w={15} ml={7} />
            <ToolIcon n="docWrench" w={14} ml={8} />
            <Divider $ml={7} />
            <Overflow><Icon n="overflow" /></Overflow>
          </Toolbar>
          <Tree>
            <TreeRow $pl={17}>
              <RowBody $w={100}><Icon n="folderOpen" /><Box />Content</RowBody>
            </TreeRow>
            <TreeRow $pl={17}>
              <Twist><Icon n="chevron" /></Twist>
              <RowBody $w={100}><Icon n="folder" /><Box />Resources</RowBody>
            </TreeRow>
            {files.map(([t, c]) => (
              <TreeRow key={t} $pl={36}>
                <RowBody $w={149} $on={t.startsWith('05')}>
                  <Icon n="edge" w={16} h={16} />
                  <Box $c={c} />
                  {t}
                </RowBody>
              </TreeRow>
            ))}
          </Tree>
          <FileInfo>
            <Icon n="edge" />
            <div>
              05-demografia
              <Muted>Microsoft Edge HTML Document</Muted>
            </div>
          </FileInfo>
        </Panel>

        <Panel $w={1120}>
          <PanelHead $on>
            <Icon n="grip" />
            <HeadTitle>01-polozenie.htm</HeadTitle>
            <PanelTools r={6} />
          </PanelHead>
          <DocTabs>
            <Tab w={177} icon="pageYellow" text="01-polozenie.htm" tw={105} pl={21} />
            <Tab w={98} icon="target" text="PDF" tw={34} pl={12} dim />
            <Tab w={113} icon="target" text="HTML5" tw={49} pl={12} dim />
            <Tab w={99} icon="toc" text="TOC" tw={35} pl={14} dim />
            <Tab w={131} icon="start" text="Start Page" tw={67} pl={11} dim />
            <TabMenu><Icon n="tabMenu" /></TabMenu>
          </DocTabs>
          <Toolbar $h={25}>
            <Divider $ml={3} />
            <ToolIcon n="preview" ml={4} />
            <Arrow $ml={5} />
            <Divider $ml={6} />
            <ToolIcon n="tagSearch" ml={5} />
            <Slot $w={72} $ml={9}>Layout (Print)</Slot>
            <Arrow $ml={5} />
            <Slot $w={25} $ml={9}>print</Slot>
            <Arrow $ml={5} />
            <Slot $w={65} $ml={9}>Page Layout</Slot>
            <Arrow $ml={5} />
            <Divider $ml={7} />
            <ToolIcon n="linkDoc" w={15} ml={7} />
            <ToolIcon n="xref" ml={6} />
            <ToolIcon n="image" ml={5} />
            <Arrow $ml={6} />
            <ToolIcon n="snipDoc" w={13} ml={7} />
            <Arrow $ml={6} />
            <Divider $ml={6} />
            <ToolIcon n="docX" w={13} ml={6} />
            <Arrow $ml={6} />
            <ToolIcon n="docA" w={13} ml={7} />
            <Arrow $ml={6} />
            <Divider $ml={6} />
            <ToolIcon n="iI" ml={5} />
            <ToolIcon n="cI" ml={7} />
            <Divider $ml={7} />
            <Slot $w={8} $ml={9}><Glyph>¶</Glyph></Slot>
            <ToolIcon n="eyeCode" ml={9} />
            <Arrow $ml={6} />
            <ToolIcon n="expandOff" w={15} ml={6} />
            <ToolIcon n="collapse" w={15} ml={8} />
            <Divider $ml={8} />
            <ToolIcon n="panelArrow" ml={5} />
          </Toolbar>
          <Surface>
            <Gutter>
              <GutterColumn><Bar $h={420}>html</Bar></GutterColumn>
              <GutterColumn $top={8}><Bar $h={420}>body</Bar></GutterColumn>
              <GutterColumn $top={24}>
                <Bar $h={37} $on>h1</Bar>
                <Bar $h={224} $mt={19}>p</Bar>
                <Bar $h={110} $mt={9}>p</Bar>
              </GutterColumn>
              <GutterColumn $top={313}><Bar $h={110}>img</Bar></GutterColumn>
            </Gutter>
            <Stage>
              <Markup>(text markup)</Markup>
              <Canvas>
                <Desk>
                  <Sheet>
                    <HeaderFrame />
                    <BodyFrame>
                      <Heading>
                        <Handle width="5" height="44">
                          <path d="M2.500 5v34M.5.500h4v4h-4zM.5 39.500h4v4h-4z" fill="none" stroke="#999" />
                        </Handle>
                        Położenie
                      </Heading>
                      {paragraph.map(([t, ls]) => <Line key={t} $ls={ls}>{t}</Line>)}
                      <MapBox><PolandMap /></MapBox>
                    </BodyFrame>
                  </Sheet>
                </Desk>
                <Scroll>
                  <ScrollEnd><Icon n="up" /></ScrollEnd>
                  <Thumb />
                  <ScrollEnd><Icon n="down" /></ScrollEnd>
                </Scroll>
              </Canvas>
            </Stage>
          </Surface>
          <Toolbar $h={25}>
            <Slot $w={52} $ml={3}>Words: 76</Slot>
            <Divider $ml={7} />
            <ToolIcon n="navOff" w={15} ml={6} />
            <ToolIcon n="leftOff" w={15} ml={8} />
            <ToolIcon n="rightOff" w={15} ml={8} />
            <ToolIcon n="navOff" w={15} ml={8} />
            <Divider $ml={7} />
            <Slot $w={28} $ml={5}>Page:</Slot>
            <Spinner>
              1
              <SpinButtons>
                <SpinButton $up><Caret /></SpinButton>
                <SpinButton><Caret /></SpinButton>
              </SpinButtons>
            </Spinner>
            <Slot $w={20} $ml={3}>of 1</Slot>
            <Divider $ml={7} />
            <ToolIcon n="hundred" w={15} ml={5} />
            <Slot $w={73} $ml={3}>Scale to 100%</Slot>
            <ToolIcon n="minus" w={15} ml={17} />
            <ToolIcon n="plus" w={15} ml={8} />
            <ZoomBox>100%<Caret /></ZoomBox>
            <Divider $ml={5} />
            <ToolIcon n="colors" w={15} ml={5} />
            <Divider $ml={8} />
            <Pressed $h={22} $ml={2}><Icon n="structV" /></Pressed>
            <Pressed $h={22}><Icon n="structH" /></Pressed>
            <Divider $ml={3} />
            <Pressed $h={22} $ml={2}><Icon n="eyeTag" /></Pressed>
            <Divider $ml={3} />
            <ToolIcon n="rulerH" ml={5} />
            <ToolIcon n="rulerV" w={11} ml={10} />
            <Divider $ml={9} />
          </Toolbar>
          <ModeTabs>
            <ModeTab $w={74} $ml={9}>
              <TabShape width="74" height="17">
                <path d="M0 -1C8 0 6 16.500 14 16.500H60C68 16.500 66 0 73 -1z" fill="#fff" stroke="#999" />
              </TabShape>
              <ModeLabel>XML Editor</ModeLabel>
            </ModeTab>
            <ModeTab $w={66} $ml={-6}>
              <TabShape width="66" height="17">
                <path d="M5 6C5 12 7 16.500 10 16.500H53C61 16.500 58 0 65 -1H6z" fill="#dcdcdc" stroke="#999" />
              </TabShape>
              <ModeLabel>Text Editor</ModeLabel>
            </ModeTab>
            <Dots><Dot /><Dot /><Dot /></Dots>
            <SplitTools><Icon n="splitV" /><Icon n="splitUp" /></SplitTools>
          </ModeTabs>
        </Panel>

        <Panel $w={191}>
          <PanelHead>
            <Icon n="grip" />
            <HeadTitle>Project Organizer</HeadTitle>
            <PanelTools r={6} />
          </PanelHead>
          <Toolbar $h={25}>
            <Pressed><Icon n="folder" /></Pressed>
            <ToolIcon n="table" w={15} ml={4} />
            <Divider $ml={7} />
            <ToolIcon n="expand" w={15} ml={5} />
            <ToolIcon n="collapse" w={15} ml={8} />
            <Pressed $ml={5}><Icon n="colors" /></Pressed>
            <Divider $ml={3} />
            <ToolIcon n="upload" ml={5} />
            <ToolIcon n="sync" ml={7} />
            <Overflow><Icon n="overflow" /></Overflow>
          </Toolbar>
          <Tree>
            <TreeRow $pl={17}>
              <RowBody $w={83} $on><Gap $w={0} style={{ marginLeft: -3 }} /><Icon n="briefcase" /><Box />Project</RowBody>
            </TreeRow>
            {folders.map((t) => (
              <TreeRow key={t} $pl={17}>
                <Twist><Icon n="chevron" /></Twist>
                <RowBody $w={83}><Icon n="folder" /><Box />{t}</RowBody>
              </TreeRow>
            ))}
          </Tree>
        </Panel>
      </Work>
      <Status><Icon n="sizer" /></Status>
    </Frame>
  );
}
